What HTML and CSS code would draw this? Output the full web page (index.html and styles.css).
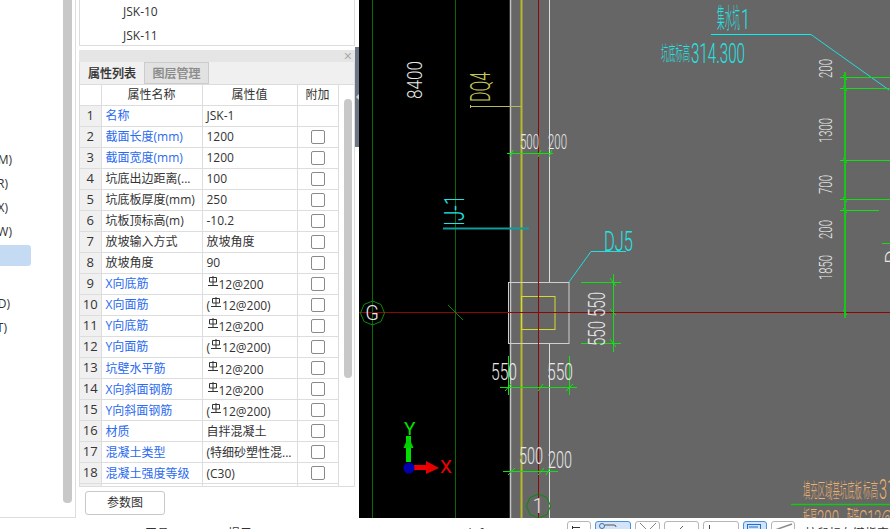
FILE: index.html
```html
<!DOCTYPE html>
<html lang="zh-CN">
<head>
<meta charset="utf-8">
<title>基坑属性</title>
<link rel="stylesheet" href="styles.css">
</head>
<body>
<svg class="defs" width="0" height="0" aria-hidden="true"><defs>
<symbol id="rebar" viewBox="0 0 12 11"><path d="M2.500 1.500h7v4.500h-7zM6 0v9.500M1 9.500h10" fill="none" stroke="#333" stroke-width="1"/></symbol>
</defs></svg>
<div class="app">
  <div class="main">
    <aside class="nav">
      <ul class="nav-list">
        <li class="nav-item"><span class="end12">门(M)</span></li>
        <li class="nav-item"><span class="end8">窗(R)</span></li>
        <li class="nav-item"><span class="end8">板(X)</span></li>
        <li class="nav-item"><span class="end12">墙(W)</span></li>
        <li class="nav-item selected"></li>
        <li class="nav-item"></li>
        <li class="nav-item"><span class="end10">洞(D)</span></li>
        <li class="nav-item"><span class="end7">土(T)</span></li>
      </ul>
      <div class="nav-scroll"></div>
    </aside>
    <section class="panel">
      <div class="list-box">
        <div class="list-row">JSK-10</div>
        <div class="list-row">JSK-11</div>
      </div>
      <div class="panel-head"><span class="close">×</span></div>
      <div class="tabs">
        <div class="tab active">属性列表</div>
        <div class="tab">图层管理</div>
      </div>
      <div class="grid-wrap">
        <table class="grid">
          <colgroup><col class="c1"><col class="c2"><col class="c3"><col class="c4"></colgroup>
          <thead><tr><th></th><th>属性名称</th><th>属性值</th><th>附加</th></tr></thead>
          <tbody>
            <tr><td class="n">1</td><td class="blue">名称</td><td>JSK-1</td><td></td></tr>
            <tr><td class="n">2</td><td class="blue">截面长度(mm)</td><td>1200</td><td><i class="cb"></i></td></tr>
            <tr><td class="n">3</td><td class="blue">截面宽度(mm)</td><td>1200</td><td><i class="cb"></i></td></tr>
            <tr><td class="n">4</td><td>坑底出边距离(...</td><td>100</td><td><i class="cb"></i></td></tr>
            <tr><td class="n">5</td><td>坑底板厚度(mm)</td><td>250</td><td><i class="cb"></i></td></tr>
            <tr><td class="n">6</td><td>坑板顶标高(m)</td><td>-10.2</td><td><i class="cb"></i></td></tr>
            <tr><td class="n">7</td><td>放坡输入方式</td><td>放坡角度</td><td><i class="cb"></i></td></tr>
            <tr><td class="n">8</td><td>放坡角度</td><td>90</td><td><i class="cb"></i></td></tr>
            <tr><td class="n">9</td><td class="blue">X向底筋</td><td><svg class="rb"><use href="#rebar"/></svg>12@200</td><td><i class="cb"></i></td></tr>
            <tr><td class="n">10</td><td class="blue">X向面筋</td><td>(<svg class="rb"><use href="#rebar"/></svg>12@200)</td><td><i class="cb"></i></td></tr>
            <tr><td class="n">11</td><td class="blue">Y向底筋</td><td><svg class="rb"><use href="#rebar"/></svg>12@200</td><td><i class="cb"></i></td></tr>
            <tr><td class="n">12</td><td class="blue">Y向面筋</td><td>(<svg class="rb"><use href="#rebar"/></svg>12@200)</td><td><i class="cb"></i></td></tr>
            <tr><td class="n">13</td><td class="blue">坑壁水平筋</td><td><svg class="rb"><use href="#rebar"/></svg>12@200</td><td><i class="cb"></i></td></tr>
            <tr><td class="n">14</td><td class="blue">X向斜面钢筋</td><td><svg class="rb"><use href="#rebar"/></svg>12@200</td><td><i class="cb"></i></td></tr>
            <tr><td class="n">15</td><td class="blue">Y向斜面钢筋</td><td>(<svg class="rb"><use href="#rebar"/></svg>12@200)</td><td><i class="cb"></i></td></tr>
            <tr><td class="n">16</td><td class="blue">材质</td><td>自拌混凝土</td><td><i class="cb"></i></td></tr>
            <tr><td class="n">17</td><td class="blue">混凝土类型</td><td>(特细砂塑性混...</td><td><i class="cb"></i></td></tr>
            <tr><td class="n">18</td><td class="blue">混凝土强度等级</td><td>(C30)</td><td><i class="cb"></i></td></tr>
            <tr class="cut"><td class="n"></td><td></td><td></td><td></td></tr>
          </tbody>
        </table>
        <div class="grid-scroll"><div class="thumb"></div></div>
      </div>
      <div class="btn-row"><button class="btn">参数图</button></div>
    </section>
    <div class="splitter"><div class="handle"><i class="arrow"></i></div></div>
    <div class="canvas">
      <svg class="cad" width="531" height="518" viewBox="359 0 531 518">
        <rect x="359" y="0" width="151" height="518" fill="#000"/>
        <rect x="510" y="0" width="380" height="518" fill="#666"/>
        <g fill="none">
          <path d="M372.500 0V518M455.500 0V518" stroke="#0a6a0a"/>
          <path d="M510.500 0V518" stroke="#c4c4c4" stroke-width="1.500"/>
          <path d="M521.500 0V518" stroke="#b8b82c" stroke-width="2"/>
          <path d="M549.500 0V282M549.500 343V518" stroke="#dcdcdc" stroke-width="1"/>
          <rect x="508.500" y="282.500" width="60.500" height="61" stroke="#cfcfcf" stroke-width="1"/>
          <rect x="521.500" y="296.500" width="33.500" height="33" stroke="#d8d82c" stroke-width="1"/>
          <path d="M359 312.500H890" stroke="#8e0606"/>
          <path d="M538.500 0V518" stroke="#8e0606"/>
          <path d="M448 305L463 320" stroke="#0a8a0a"/>
          <path d="M470.500 105V108M470 106.500H522" stroke="#b8b85a"/>
          <path d="M443 228.500H529" stroke="#0e9c9c" stroke-width="2"/>
          <path d="M569 282L591 251.500H626" stroke="#22dede"/>
          <path d="M711 34.500H811" stroke="#00f4f4" stroke-width="1"/>
          <path d="M811 34.500L889 90" stroke="#22dede"/>
          <g stroke="#12e012">
            <path d="M507 153.500H553M510 157L513 150M538 157L541 150M549 157L552 150"/>
            <path d="M581 282.500H621M581 343.500H621M613.500 274V352M610 278L616 286M610 309L616 315M610 339L616 347"/>
            <path d="M500 387.500H577M508.500 356V395M569.500 356V395M505 391L511 384M538 391L543 384M566 391L573 384"/>
            <path d="M503 471.500H558M508 475L515 468M538 475L544 468M546 475L550 468"/>
            <path d="M840 77.500H890M840 88.500H890M840 160.500H890M840 199.500H890M840 210.500H879M882 243.500H890"/>
            <path d="M843 75L847 80M843 86L847 91M843 158L847 163M843 197L847 202M843 208L847 213M843 310L847 315"/>
          </g>
          <path d="M845 72V318" stroke="#16c816" stroke-width="2"/>
          <path d="M791 504.500H890" stroke="#14c814" stroke-width="1.500"/>
          <polygon points="372.500,301 381,304.500 384.500,313 381,321.500 372.500,325 364,321.500 360.500,313 364,304.500" stroke="#0a8a0a"/>
          <polygon points="538.500,494 547,497.500 550.500,506 547,514.500 538.500,518 530,514.500 526.500,506 530,497.500" stroke="#0a8a0a"/>
        </g>
        <text class="t w" transform="translate(422,99) rotate(-90)" textLength="38" lengthAdjust="spacingAndGlyphs">8400</text>
        <text class="t y big" transform="translate(490,102) rotate(-90)" textLength="30" lengthAdjust="spacingAndGlyphs">DQ4</text>
        <text class="t c big" transform="translate(464,226) rotate(-90)" textLength="31" lengthAdjust="spacingAndGlyphs">IJ-1</text>
        <text class="t w s" x="520" y="149" textLength="19" lengthAdjust="spacingAndGlyphs">500</text>
        <text class="t w s" x="548" y="149" textLength="19" lengthAdjust="spacingAndGlyphs">200</text>
        <text class="t c big" x="604" y="251" textLength="29" lengthAdjust="spacingAndGlyphs">DJ5</text>
        <text class="t w d" transform="translate(605,346) rotate(-90)" textLength="25" lengthAdjust="spacingAndGlyphs">550</text>
        <text class="t w d" transform="translate(605,317) rotate(-90)" textLength="25" lengthAdjust="spacingAndGlyphs">550</text>
        <text class="t w d" x="491" y="380" textLength="26" lengthAdjust="spacingAndGlyphs">550</text>
        <text class="t w d" x="547" y="380" textLength="26" lengthAdjust="spacingAndGlyphs">550</text>
        <text class="t w d" x="519" y="464" textLength="24" lengthAdjust="spacingAndGlyphs">500</text>
        <text class="t w d" x="548" y="468" textLength="24" lengthAdjust="spacingAndGlyphs">200</text>
        <text class="t w g" x="372" y="319.500" text-anchor="middle">G</text>
        <text class="t w g" x="538" y="512.500" text-anchor="middle">1</text>
        <text class="cjk c h1" x="717" y="28" textLength="23" lengthAdjust="spacingAndGlyphs">集水坑</text>
        <text class="t c h1" x="741" y="29" textLength="9" lengthAdjust="spacingAndGlyphs">1</text>
        <text class="cjk c h2" x="661" y="61" textLength="29" lengthAdjust="spacingAndGlyphs">坑底标高</text>
        <text class="t c h1" x="691" y="63" textLength="54" lengthAdjust="spacingAndGlyphs">314.300</text>
        <text class="t w sd" transform="translate(832,78) rotate(-90)" textLength="19" lengthAdjust="spacingAndGlyphs">200</text>
        <text class="t w sd" transform="translate(832,143) rotate(-90)" textLength="25" lengthAdjust="spacingAndGlyphs">1300</text>
        <text class="t w sd" transform="translate(832,194) rotate(-90)" textLength="19" lengthAdjust="spacingAndGlyphs">700</text>
        <text class="t w sd" transform="translate(832,239) rotate(-90)" textLength="19" lengthAdjust="spacingAndGlyphs">200</text>
        <text class="t w sd" transform="translate(832,280) rotate(-90)" textLength="25" lengthAdjust="spacingAndGlyphs">1850</text>
        <text class="t w sd" transform="translate(898,264) rotate(-90)" textLength="14" lengthAdjust="spacingAndGlyphs">D</text>
        <text class="cjk o h2" x="803" y="498" textLength="59" lengthAdjust="spacingAndGlyphs">填充区域基坑底板</text>
        <text class="cjk o h2" x="863" y="498" textLength="15" lengthAdjust="spacingAndGlyphs">标高</text>
        <text class="t o h1" x="879" y="499" textLength="16" lengthAdjust="spacingAndGlyphs">31</text>
        <text class="cjk o h3" x="803" y="526" textLength="14" lengthAdjust="spacingAndGlyphs">板厚</text>
        <text class="t o h3" x="817" y="526" textLength="22" lengthAdjust="spacingAndGlyphs">200</text>
        <text class="cjk o h3" x="847" y="526" textLength="12" lengthAdjust="spacingAndGlyphs">配筋</text>
        <text class="t o h3" x="859" y="526" textLength="34" lengthAdjust="spacingAndGlyphs">C12@</text>
        <g>
          <rect x="406" y="436" width="5" height="26" fill="#00e000"/>
          <polygon points="403.500,448 408.500,436 413.500,448" fill="#00d000"/>
          <rect x="414" y="465" width="14" height="5" fill="#f00000"/>
          <polygon points="426,461 439,468 426,474" fill="#e80000"/>
          <circle cx="409" cy="468" r="5.500" fill="#0000b0"/>
        </g>
        <text class="t ax gr" x="404" y="435">Y</text>
        <text class="t ax re" x="440" y="473">X</text>
      </svg>
    </div>
  </div>
  <footer class="status">
    <div class="status-text">
      <span class="st a">工具</span><span class="st b">提示</span><span class="st e">Shift</span>
    </div>
    <div class="tools">
      <i class="tool t24"><svg class="ti"><path d="M4.500 4V8M4.500 5.500H12" stroke="#333" fill="none"/></svg></i>
      <i class="tool t36 on"><svg class="ti"><circle cx="6" cy="4" r="2.500" stroke="#3a6ea8" fill="none"/><path d="M9 3H18Q20 3 20 5" stroke="#555" fill="none"/></svg></i>
      <i class="tool t25"><svg class="ti"><path d="M4 1L10 7M20 1L14 7" stroke="#888" fill="none"/></svg></i>
      <i class="tool t35"><svg class="ti"><path d="M15 7L18 4" stroke="#666" fill="none"/></svg></i>
      <i class="tool t36"><svg class="ti"><path d="M5.500 3V8" stroke="#444" fill="none"/></svg></i>
      <i class="tool t24 on"><svg class="ti"><rect x="3.500" y="2.500" width="13" height="6" stroke="#1e6fd0" fill="none"/><path d="M5 5H14" stroke="#1e6fd0"/></svg></i>
      <i class="tool t24"><svg class="ti"><path d="M3 8L20 2" stroke="#8a8a92" stroke-width="1.500" fill="none"/></svg></i>
    </div>
    <div class="status-end">按鼠标左键指定第一个角点</div>
  </footer>
</div>
</body>
</html>
```
FILE: styles.css
```css
* { box-sizing: border-box; }
html, body { margin: 0; padding: 0; }
body {
  width: 890px;
  height: 529px;
  overflow: hidden;
  background: #fff;
  color: #333;
  font: 12px/1.2 "Open Sans", "Noto Sans CJK SC", sans-serif;
}
.defs { position: absolute; }
.app { display: flex; flex-direction: column; height: 529px; }
.main { display: flex; height: 518px; }

.nav {
  width: 76px;
  height: 518px;
  margin-right: 3px;
  border-right: 1px solid #ddd;
  border-bottom: 1px solid #ddd;
  display: flex;
  justify-content: space-between;
}
.nav-list { list-style: none; margin: 0; padding: 148px 0 0; width: 31px; }
.nav-item { height: 24px; width: 31px; display: flex; align-items: center; overflow: hidden; line-height: 24px; }
.nav-item span { display: flex; justify-content: flex-end; white-space: nowrap; flex: none; }
.end12 { width: 12px; }
.end10 { width: 10px; }
.end8 { width: 8px; }
.end7 { width: 7px; }
.selected { background: #c5dbf3; border-radius: 0 3px 3px 0; height: 21px; margin: 1px 0 2px; }
.nav-scroll { width: 9px; height: 503px; margin-right: 3px; background: #c8c8c8; border-radius: 0 0 4px 4px; }

.panel { width: 276px; height: 518px; display: flex; flex-direction: column; }
.list-box { height: 46px; border: 1px solid #ddd; border-top: 0; padding: 0 0 0 43px; margin-bottom: 4px; }
.list-row { height: 24px; line-height: 23px; }
.panel-head { height: 12px; background: #e5e5e5; display: flex; justify-content: flex-end; align-items: center; padding-right: 3px; }
.close { color: #aaa; font: 14px/12px "Liberation Sans", sans-serif; }
.tabs { height: 23px; background: #f0f0f0; display: flex; border-bottom: 1px solid #ddd; border-right: 1px solid #ddd; border-left: 1px solid #ddd; }
.tab { height: 22px; line-height: 24px; text-align: center; width: 64px; color: #333; font-weight: 500; -webkit-text-stroke: 0.2px #333; }
.tab:not(.active) { width: 65px; background: #e2e2e2; color: #8a8a8a; border: 1px solid #ccc; line-height: 22px; -webkit-text-stroke: 0.2px #8a8a8a; }
.tab.active { border-bottom: 1px solid #f0f0f0; }

.grid-wrap { display: flex; height: 402px; overflow: hidden; border: 1px solid #ddd; border-top: 0; }
.grid { border-collapse: collapse; table-layout: fixed; width: 258px; height: 402px; flex: none; }
.c1 { width: 21px; }
.c2 { width: 101px; }
.c3 { width: 95px; }
.c4 { width: 41px; }
.grid th, .grid td { border: 1px solid #ddd; height: 21px; padding: 2px 0 0 4px; font-weight: 400; white-space: nowrap; overflow: hidden; }
.grid th { height: 20px; text-align: center; padding: 1px 0 0; border-top: 0; background: #fff; }
.grid tr > :first-child { border-left: 0; }
.grid tr > td:last-child { padding: 0; text-align: center; }
.grid td.n { background: #f0f0f0; padding: 1px 0 0; text-align: center; font-size: 13px; }
.blue { color: #2a6af0; }
.cb { display: block; width: 14px; height: 14px; margin: 1px auto 0; border: 1px solid #8a8a8a; border-radius: 2px; background: #fff; }
.rb { display: inline-block; width: 12px; height: 11px; vertical-align: 2px; }
.cut td { height: 3px; padding: 0; }
.grid-scroll { flex: 1; padding: 14px 4px 0 5px; background: #fff; }
.thumb { width: 8px; height: 279px; background: #c8c8c8; border-radius: 4px; }

.btn-row { padding: 4px 0 0 6px; }
.btn { display: block; width: 80px; height: 24px; padding: 0; background: #fff; border: 1px solid #c8c8c8; border-radius: 3px; color: #333; font: inherit; }

.splitter { width: 4px; }
.handle { margin-top: 47px; height: 100px; background: #6b7785; display: flex; align-items: center; }
.arrow { width: 0; height: 0; border: 3px solid transparent; border-right: 3px solid #cfd3d8; border-left: 0; margin-left: 1px; }

.canvas { width: 531px; height: 518px; overflow: hidden; }
.cad { display: block; }
.t { font-family: Roboto, "Liberation Sans", sans-serif; font-weight: 300; font-size: 20px; }
.cjk { font-family: "Noto Sans CJK SC", sans-serif; font-weight: 300; }
.w { fill: #e8e8e8; }
.y { fill: #c4c45a; }
.c { fill: #22e4e4; }
.o { fill: #eab070; }
.big { font-size: 27px; }
.s { font-size: 20px; }
.d { font-size: 24px; }
.sd { font-size: 19px; }
.g { font-size: 20px; }
.h1 { font-size: 27px; }
.h2 { font-size: 20px; }
.h3 { font-size: 22px; }
.ax { font-size: 19px; font-weight: 400; }
.gr { fill: #00e000; }
.re { fill: #f00000; }

.status { height: 11px; overflow: hidden; display: flex; }
.status-text { width: 567px; display: flex; padding: 8px 0 0 145px; flex: none; }
.st { line-height: 16px; white-space: nowrap; }
.a { width: 83px; }
.b { width: 234px; }
.e { width: 30px; }
.tools { display: flex; gap: 4px; padding-top: 3px; width: 238px; flex: none; }
.tool { display: block; height: 22px; border: 1px solid #b5b5b5; border-radius: 3px; background: #fff; flex: none; }
.tool.on { background: #d3e4f8; border-color: #4a90e2; }
.ti { display: block; width: 100%; height: 9px; }
.t24 { width: 24px; }
.t25 { width: 25px; }
.t35 { width: 35px; }
.t36 { width: 36px; }
.status-end { padding-top: 8px; white-space: nowrap; line-height: 16px; }
```
